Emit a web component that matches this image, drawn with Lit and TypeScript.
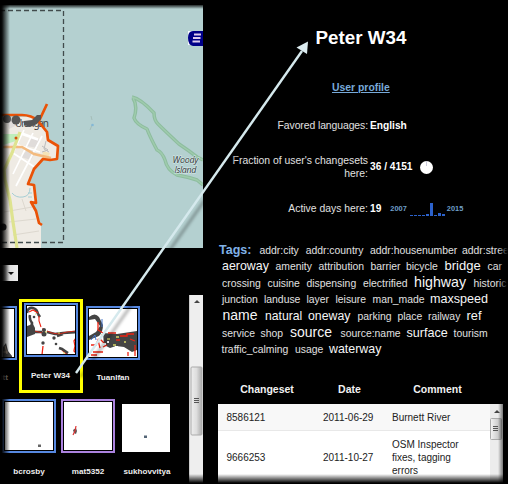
import { LitElement, html, css, svg } from "lit";
import { customElement } from "lit/decorators.js";

type Tag = [text: string, width: number, size: number];
const S = 10.4;
const tagRows: { h: number; x: number; tags: Tag[] }[] = [
  { h: 16, x: 256.5, tags: [["addr:city", 46.2, S], ["addr:country", 64.3, S], ["addr:housenumber", 92, S], ["addr:street", 60, S]] },
  { h: 16, x: 222, tags: [["aeroway", 53.5, 12.4], ["amenity", 43, S], ["attribution", 52, S], ["barrier", 35.5, S], ["bicycle", 38.5, S], ["bridge", 43, 13], ["car", 20, S]] },
  { h: 16.5, x: 222, tags: [["crossing", 45.5, S], ["cuisine", 39, S], ["dispensing", 56.5, S], ["electrified", 51, S], ["highway", 59.5, 14.2], ["historic", 40, S]] },
  { h: 16.5, x: 222, tags: [["junction", 42, S], ["landuse", 42.5, S], ["layer", 29, S], ["leisure", 37, S], ["man_made", 57.5, S], ["maxspeed", 60, 12.6]] },
  { h: 17, x: 222.5, tags: [["name", 42.5, 14], ["natural", 43, 12.2], ["oneway", 49.5, 12.3], ["parking", 40, S], ["place", 30.5, S], ["railway", 38.5, S], ["ref", 20, 12.8]] },
  { h: 16.5, x: 222, tags: [["service", 38.5, S], ["shop", 29.5, S], ["source", 50.5, 14], ["source:name", 66, S], ["surface", 47, 12.6], ["tourism", 38, S]] },
  { h: 17.5, x: 221.5, tags: [["traffic_calming", 73.5, S], ["usage", 34, S], ["waterway", 60, 12.4]] },
];
const days = [1, 1, 1, 1, 2.5, 13, 1, 3.5, 2.5];

const townArt = svg`
  <path d="M0 7Q1 1 6 2Q10 3 11 8M3 9Q2 13 5 17L4 23M11 8l2 3" fill="none" stroke="#444" stroke-width="2.600"/>
  <path d="M2 6l4-2 5 3M12 10l0 5 2 6M16 22v6" fill="none" stroke="#e21" stroke-width="1.100"/>
  <path d="M0 20l6-2 2 4v6l-8 3z" fill="#444"/>
  <path d="M7 26h8M20 26l8 2 8-1 13-1M30 30l6-2" fill="none" stroke="#444" stroke-width="2.600"/>
  <path d="M8 25l7 2M20 25l5 2 7 1 8-2 9-1" fill="none" stroke="#e21" stroke-width=".8"/>
  <circle cx="17" cy="28" r="2.500" fill="#444"/><circle cx="16" cy="37" r="1.700" fill="#444"/>
  <circle cx="27" cy="32" r="1.700" fill="#444"/><circle cx="29" cy="38" r="1.300" fill="#444"/>
  <circle cx="17" cy="24" r="2" fill="#444"/><circle cx="7" cy="11" r="1.300" fill="#444"/>
  <path d="M16 40l-1 9M49 32l-2 3 1 5-1 5 2 2M35 44l6 5" fill="none" stroke="#e21" stroke-width="1.300"/>
  <path d="M32 42l3 1 3 2 3 2" fill="none" stroke="#444" stroke-width="2.600"/>
  <path d="M18 26h2M8 8h1M31 27h2M36 47h2" stroke="#dd6" stroke-width="1"/>`;
const coastArt = svg`
  <path d="M0 8Q6 3 10 8L14 16Q14 23 10 27L0 31V27l7-4 4-6-5-7-6 1z" fill="#444"/>
  <path d="M13 10v8M2 31l4-5 1 5" fill="none" stroke="#47c" stroke-width="1"/>
  <path d="M14 24l14 1 20-3v19l-5 2-8-5-8-1-6 2-6-3z" fill="#444"/>
  <path d="M9 13v8l5 3M2 36h5l2-5 2 8M4 43h10M2 46h6M14 38l4-2M19 24h8M31 27h7v-2h7M39 43v4M46 36v11M27 31h4M41 30l5 2M11 30l5 5" fill="none" stroke="#e21" stroke-width="1.300"/>
  <path d="M12 26h2M18 30h3M27 28h3M24 36h3M35 33h2" stroke="#d8d76a" stroke-width="1.300"/>
  <path d="M18 33h2M26 38h3M14 35h3" stroke="#fff" stroke-width="2"/>`;

@customElement("app-root")
export class AppRoot extends LitElement {
  static styles = css`
    :host { display: block; position: relative; width: 508px; height: 484px; background: #000; color: #e0e0e0; overflow: hidden; font: 10.4px "Liberation Sans", Arial, sans-serif; }
    * { box-sizing: border-box; }
    svg { display: block; }
    .page { display: flex; height: 484px; }
    .left { width: 203px; flex: none; padding-top: 5px; }
    .right { width: 305px; flex: none; overflow: hidden; }
    .map { width: 203px; height: 243px; }
    .place { font: italic 9px "Open Sans", "Noto Sans", sans-serif; fill: #2c3333; paint-order: stroke; stroke: #dcebeb; stroke-width: 1px; }
    .town { font: 10px "Noto Sans", sans-serif; fill: #444; }
    .select { margin: 17px 0 0 0; width: 18px; height: 16px; background: linear-gradient(90deg, #222, #ddd 8px, #eee); display: flex; align-items: center; justify-content: center; padding-left: 3px; }
    .caret { width: 0; border: 3px solid transparent; border-top: 3px solid #111; border-bottom: 0; }
    .lower { display: flex; height: 189px; margin-top: 14px; }
    .gallery { width: 189px; flex: none; overflow: hidden; }
    .row { display: flex; }
    .row.top { padding-top: 4px; height: 98px; }
    .row.second { padding: 6px 0 0 2px; gap: 5px; height: 91px; }
    .card { width: 64px; height: 94px; border: 3px solid transparent; text-align: center; font: bold 8.1px/10px "Liberation Sans", Arial, sans-serif; color: #eee; flex: none; }
    .card.clip { width: 19px; padding-top: 7px; border: 0; }
    .card.clip .frame { margin-left: -37px; }
    .card.clip .name { margin: 13px 0 0 -6px; text-align: right; width: 14px; color: #888; }
    .card.chosen { border-color: #ff0; padding: 1px 0 0 2px; }
    .card.third { border-width: 0 0 0 3px; padding-top: 7px; width: 57px; }
    .frame { width: 54px; height: 54px; border: 2px solid #5688e0; padding: 1px; }
    .frame svg { width: 48px; height: 48px; background: #fff; }
    .frame.purple { border-color: #ab82df; }
    .frame.none { border-color: transparent; padding: 3px 0 0 0; width: 53px; margin-left: -0.500px; }
    .name { margin-top: 13px; white-space: nowrap; }
    .chosen .name { margin-left: -3px; margin-top: 14px; }
    .small { width: 54px; text-align: center; font: bold 8.1px/10px "Liberation Sans", Arial, sans-serif; color: #eee; flex: none; }
    .small .name { margin-top: 14px; }
    .scroll { width: 14px; background: #eee; border-left: 1px solid #ccc; }
    .scroll svg { width: 13px; height: 189px; }
    h1 { margin: 26px 0 0 12px; text-align: center; width: 292px; font: bold 18.8px/24px "Liberation Sans", Arial, sans-serif; color: #fff; height: 24px; }
    .profile { display: block; width: 59px; margin: 31px 0 0 129px; font-weight: bold; line-height: 13px; color: #78aad9; white-space: nowrap; text-decoration: underline; }
    .info { display: grid; grid-template-columns: 165px 1fr; column-gap: 2px; margin-top: 19px; grid-template-rows: 26px 57px 27px; align-items: center; line-height: 12.5px; white-space: nowrap; }
    .label { text-align: right; }
    .label.tight { letter-spacing: -0.08px; }
    .value { font-weight: bold; font-size: 10.2px; color: #fff; display: flex; align-items: center; }
    .pie { width: 13px; height: 13px; margin-left: 7px; }
    .year { font-size: 7.4px; color: #6f9fc9; }
    .year.from { margin-left: 9px; }
    .bars { display: flex; align-items: flex-end; gap: 1px; height: 13px; margin: 0 2px 0 3px; }
    .bar { width: 3px; background: #2c62cc; }
    .tags { margin-top: 19px; }
    .tagrow { display: flex; align-items: baseline; white-space: nowrap; }
    .tag { flex: none; line-height: 16px; }
    .tag.big { color: #f6f6f6; }
    .tagtitle { color: #80b2e8; font-weight: bold; font-size: 12.5px; line-height: 16px; width: 40.5px; flex: none; }
    .head { display: grid; grid-template-columns: 98px 67px 109px; margin: 24px 0 0 15px; text-align: center; font-weight: bold; font-size: 10.5px; line-height: 14px; height: 22px; color: #f2f2f2; }
    .tablebox { display: flex; width: 285px; height: 79px; margin-left: 15px; background: #fff; color: #222; }
    .grid { width: 272px; }
    .line { display: grid; grid-template-columns: 96.5px 69px 100px; padding-left: 8.5px; align-items: center; font-size: 10px; line-height: 13px; height: 27px; background: #f8f8f8; border-bottom: 1px solid #e8e8e8; }
    .line.b { height: 52px; background: #fff; border-bottom: 0; }
    .tscroll { width: 13px; height: 79px; }
    .overlay { position: absolute; inset: 0; width: 508px; height: 484px; pointer-events: none; }
  `;

  render() {
    return html`
      <div class="page">
        <div class="left">
          ${this.map()}
          <div class="select"><div class="caret"></div></div>
          <div class="lower">
            <div class="gallery">
              <div class="row top">
                <div class="card clip"><div class="frame"><svg viewBox="0 0 48 48"><path d="M37 48V38l3-4 2 8 4 5v1z" fill="#444"/><path d="M39 37l2 8M37 43h5" stroke="#987" fill="none"/></svg></div><div class="name">itt</div></div>
                <div class="card chosen"><div class="frame"><svg viewBox="0 0 48 48">${townArt}</svg></div><div class="name">Peter W34</div></div>
                <div class="card third"><div class="frame"><svg viewBox="0 0 48 48">${coastArt}</svg></div><div class="name">Tuanlfan</div></div>
              </div>
              <div class="row second">
                <div class="small"><div class="frame"><svg viewBox="0 0 48 48"><path d="M33 42.500h3v2.500h-3z" fill="#666"/></svg></div><div class="name">bcrosby</div></div>
                <div class="small"><div class="frame purple"><svg viewBox="0 0 48 48"><path d="M9 28l3-2 1 3-1 3-2-1z" fill="#555"/><path d="M12 24l-1 5-2 4" stroke="#d33" stroke-width="1.200" fill="none"/></svg></div><div class="name">mat5352</div></div>
                <div class="small"><div class="frame none"><svg viewBox="0 0 48 48"><path d="M22 31.500h3v2.500h-3z" fill="#567"/></svg></div><div class="name">sukhovvitya</div></div>
              </div>
            </div>
            <div class="scroll"><svg viewBox="0 0 13 189"><defs><linearGradient id="a"><stop stop-color="#eee"/><stop offset=".5" stop-color="#ddd"/><stop offset="1" stop-color="#aaa"/></linearGradient></defs>
              <path d="M4 8l3-3 3 3z" fill="#444"/><rect x="1" y="72" width="11" height="68" rx="1" fill="url(#a)" stroke="#aaa"/><path d="M4 103.500h5M4 105.500h5M4 107.500h5" stroke="#555"/></svg></div>
          </div>
        </div>
        <div class="right">
          <h1>Peter W34</h1>
          <a class="profile">User profile</a>
          <div class="info">
            <div class="label tight">Favored languages:</div><div class="value">English</div>
            <div class="label">Fraction of user's changesets<br />here:</div>
            <div class="value">36 / 4151<svg class="pie" viewBox="0 0 13 13"><circle cx="6.5" cy="6.5" r="6.5" fill="#fff"/><path d="M6.5 5V0" stroke="#ccd" stroke-width="1"/></svg></div>
            <div class="label">Active days here:</div>
            <div class="value">19<span class="year from">2007</span>
              <div class="bars">${days.map((d) => html`<div class="bar" style="height:${d}px"></div>`)}</div>
              <span class="year">2015</span></div>
          </div>
          <div class="tags">
            ${tagRows.map((r, i) => html`<div class="tagrow" style="height:${r.h}px;padding-left:${(i ? r.x : 219) - 203}px">
              ${i ? "" : html`<span class="tagtitle">Tags:</span>`}
              ${r.tags.map(([t, w, s]) => html`<span class="tag ${s > 11 ? "big" : ""}" style="width:${w}px;font-size:${s}px">${t}</span>`)}
            </div>`)}
          </div>
          <div class="head"><span>Changeset</span><span>Date</span><span>Comment</span></div>
          <div class="tablebox">
            <div class="grid">
              <div class="line"><span>8586121</span><span>2011-06-29</span><span>Burnett River</span></div>
              <div class="line b"><span>9666253</span><span>2011-10-27</span><span>OSM Inspector<br />fixes, tagging<br />errors</span></div>
            </div>
            <svg class="tscroll" viewBox="0 0 13 79"><defs><linearGradient id="b"><stop stop-color="#f4f4f4"/><stop offset="1" stop-color="#bbb"/></linearGradient></defs>
              <path d="M0 0h13v79H0z" fill="#ececec"/><path d="M4 9l3-3 3 3z" fill="#444"/><rect x=".5" y="14.500" width="11" height="21" rx="1" fill="url(#b)" stroke="#aaa"/><path d="M3 22.500h5M3 24.500h5M3 26.500h5" stroke="#555" stroke-width="1"/></svg>
          </div>
        </div>
      </div>
      ${this.overlay()}
    `;
  }

  map() {
    return html`<svg class="map" viewBox="0 5 203 243">
      <rect y="5" width="203" height="243" fill="#b4d0d0"/>
      <path d="M0 120Q15 116 31 117L40 123 46 132 50 142 58 147 57 159 43 160 33 168 28 184 34 187 35 202 32 202 38 216 41 224V248H0z" fill="#efebe4"/>
      <path d="M3 134h17l-4 7-13 4z" fill="#bfeebc"/>
      <path d="M6 118l7 0 4 7-8 4zM31 137l9 3-3 8-10-2zM28 149l8 2-5 9-10-3z" fill="#e0dcda"/>
      <path d="M43 151l7 2-3 7-5-2z" fill="#f5e3b7"/>
      <path d="M18 133l20 7M13 153l23 15M18 145l22 7M42 136L16 186M33 133L13 174M24 130L9 161M22 133l16 6" stroke="#fff" stroke-width="1.700" fill="none"/>
      <path d="M4 212l28-5M9 222l27-3M13 235l26-4M22 199l4 12" stroke="#ddd8cf" fill="none"/>
      <path d="M3 147l19 0 12 7 17 4" stroke="#f3ba7e" stroke-width="2.600" fill="none"/>
      <path d="M20 132L12 153 4 170 5 180 10 200 13 222 17 248" stroke="#dee390" stroke-width="3.200" fill="none"/>
      <path d="M12 193q4 5 11 4t7-9M28 193h4M28 197h4" stroke="#a6ced4" fill="none"/>
      <path d="M46 141l-2 8 5 3M42 146l6 4-6 2" stroke="#bcbcbc" fill="none"/>
      <path d="M132 97Q141 99 154 113 154 120 158 124 164 130 179 144 188 150 197 157L203 160M133 98Q138 106 134 118 136 124 147 129 150 137 157 150 162 152 165 160 167 170 177 175 188 177 197 180L203 185" fill="none" stroke="#8dbd9e" stroke-width="3.500" stroke-linejoin="round"/>
      <path d="M132 97Q141 99 154 113 154 120 158 124 164 130 179 144 188 150 197 157L203 160M133 98Q138 106 134 118 136 124 147 129 150 137 157 150 162 152 165 160 167 170 177 175 188 177 197 180L203 185" fill="none" stroke="#9fcbad" stroke-width="1.400"/>
      <path d="M91 116l1 4M90 130l2-5" stroke="#a5bdb8" fill="none"/><circle cx="92.500" cy="125" r="1.300" fill="#84b8d6"/>
      <path d="M0 10.500H63.500V242.500H0" fill="none" stroke="#414b4c" stroke-width="1.300" stroke-dasharray="5 3"/>
      <text class="town" x="15" y="127" textLength="34">Urangan</text>
      <path d="M0 115H22Q31 115 39 121L47 104M38 121L47 132 48 140 58 146 57 159 50 160 43 159 34 169 28 184 34 185 36 203 31 202 36 211 39 223 42 225" fill="none" stroke="#ea5206" stroke-width="2.700" stroke-linejoin="round"/>
      <path d="M24 121l8-1 5-5h4v4l-4 5-7 3-6-2z" fill="#555"/><circle cx="7" cy="119" r="4" fill="#555"/><circle cx="16" cy="120" r="4.500" fill="#555"/><circle cx="3" cy="227" r="3.500" fill="#222"/>
      <circle cx="16" cy="138" r="1.500" fill="#d4520d"/>
      <text class="place" x="172.500" y="163" textLength="26">Woody</text>
      <text class="place" x="174.500" y="173" textLength="22">Island</text>
      <path d="M188 31h15v14h-15z" fill="#f7f9ff"/><path d="M203 31h-10q-5 0-5 7t5 8h10z" fill="#000088"/>
      <path d="M194 34.500h7M193 38h7.500M192.500 41.500h7.500" stroke="#dce" stroke-width="2"/>
    </svg>`;
  }

  overlay() {
    return html`<svg class="overlay" viewBox="0 0 508 484">
      <defs>
        <linearGradient id="l"><stop stop-color="#000"/><stop offset=".2" stop-color="#000" stop-opacity=".95"/><stop offset="1" stop-color="#000" stop-opacity="0"/></linearGradient>
        <linearGradient id="r"><stop stop-color="#000" stop-opacity="0"/><stop offset="1" stop-color="#000"/></linearGradient>
        <linearGradient id="t" x2="0" y2="1"><stop stop-color="#000"/><stop offset="1" stop-color="#000" stop-opacity="0"/></linearGradient>
        <linearGradient id="d" x2="0" y2="1"><stop stop-color="#000" stop-opacity="0"/><stop offset="1" stop-color="#000"/></linearGradient>
        <filter id="soft" x="-20%" y="-20%" width="140%" height="140%"><feGaussianBlur stdDeviation="1.500"/></filter>
      </defs>
      <rect width="10" height="484" fill="url(#l)"/>
      <rect x="498" width="10" height="484" fill="url(#r)"/>
      <rect y="4" width="508" height="5" fill="url(#t)"/>
      <rect y="474" width="508" height="9" fill="url(#d)"/><rect y="483" width="508" height="1"/>
      <path d="M81 377L307 54" stroke="#000" stroke-opacity=".3" stroke-width="3" filter="url(#soft)"/>
      <path d="M76 373L302 51" stroke="#d5e9ed" stroke-width="2.400"/>
      <path d="M308 41.500L296.500 47.500 307 54z" fill="#dcecf0"/>
    </svg>`;
  }
}
